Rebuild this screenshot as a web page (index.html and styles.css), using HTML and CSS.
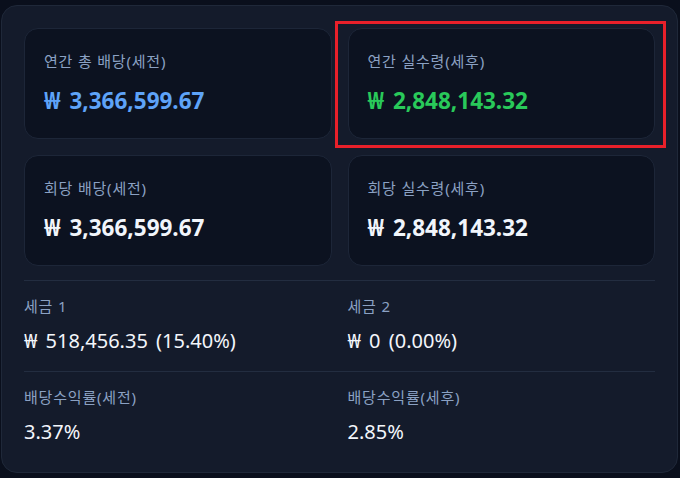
FILE: index.html
```html
<!DOCTYPE html>
<html lang="ko">
<head>
<meta charset="utf-8">
<title>배당 요약</title>
<link rel="stylesheet" href="styles.css">
</head>
<body>
<div class="panel">
  <div class="cards">
    <div class="card">
      <div class="label">연간 총 배당(세전)</div>
      <div class="value blue">₩ 3,366,599.67</div>
    </div>
    <div class="card">
      <div class="label">연간 실수령(세후)</div>
      <div class="value green">₩ 2,848,143.32</div>
    </div>
    <div class="card">
      <div class="label">회당 배당(세전)</div>
      <div class="value">₩ 3,366,599.67</div>
    </div>
    <div class="card">
      <div class="label">회당 실수령(세후)</div>
      <div class="value">₩ 2,848,143.32</div>
    </div>
  </div>
  <div class="stats">
    <div class="stat">
      <div class="stat-label">세금 1</div>
      <div class="stat-value">₩ 518,456.35 (15.40%)</div>
    </div>
    <div class="stat">
      <div class="stat-label">세금 2</div>
      <div class="stat-value">₩ 0 (0.00%)</div>
    </div>
  </div>
  <div class="stats">
    <div class="stat">
      <div class="stat-label">배당수익률(세전)</div>
      <div class="stat-value">3.37%</div>
    </div>
    <div class="stat">
      <div class="stat-label">배당수익률(세후)</div>
      <div class="stat-value">2.85%</div>
    </div>
  </div>
  <div class="highlight"></div>
</div>
</body>
</html>
```

FILE: styles.css
```css
* { box-sizing: border-box; }
html, body { margin: 0; padding: 0; }
body {
  background: #0a0f1c;
  font-family: "Noto Sans", "Noto Sans CJK KR", sans-serif;
  width: 680px;
  height: 478px;
  overflow: hidden;
}
.panel {
  position: relative;
  margin: 5px 2px 0 1px;
  height: 468px;
  background: #141b2b;
  border: 1px solid #1f2839;
  border-radius: 16px;
  padding: 22px 22px 0 22px;
}
.cards {
  display: grid;
  grid-template-columns: 1fr 1fr;
  gap: 16px;
}
.card {
  height: 111px;
  background: #0c1220;
  border: 1px solid #1d2638;
  border-radius: 14px;
  padding: 22px 19px;
}
.label {
  font-size: 15px;
  line-height: 20px;
  letter-spacing: 0.8px;
  color: #8ba1c3;
}
.value {
  margin-top: 15px;
  font-size: 22.5px;
  line-height: 30px;
  font-weight: 700;
  word-spacing: 3px;
  color: #f1f5fb;
}
.value.blue { color: #5ea3f8; }
.value.green { color: #29c95a; }
.stats {
  display: grid;
  grid-template-columns: 1fr 1fr;
  gap: 16px;
  border-top: 1px solid #232d40;
  padding: 15px 0 16px 0;
}
.cards + .stats { margin-top: 14px; }
.stat-label {
  font-size: 15px;
  line-height: 20px;
  letter-spacing: 0.8px;
  color: #8ba1c3;
}
.stat-value {
  margin-top: 11px;
  font-size: 20px;
  line-height: 28px;
  word-spacing: 3px;
  color: #f3f6fb;
}
.highlight {
  position: absolute;
  left: 333px;
  top: 15px;
  width: 331px;
  height: 127px;
  border: 3px solid #e8202a;
  pointer-events: none;
}
```
